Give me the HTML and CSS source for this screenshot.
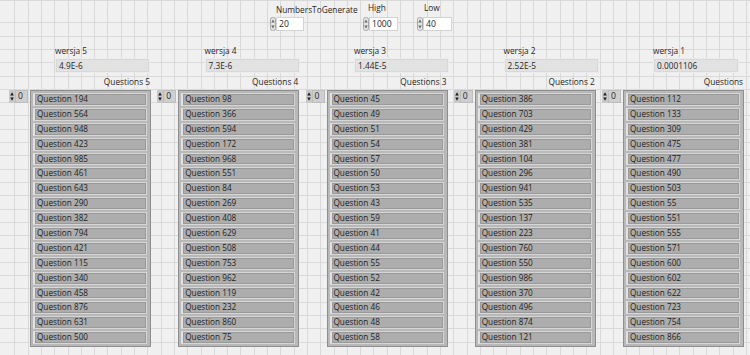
FILE: index.html
```html
<!DOCTYPE html>
<html>
<head>
<meta charset="utf-8">
<link rel="stylesheet" href="styles.css">
</head>
<body>
<div class="panel">
  <div class="top">
    <div class="ctrl ctrl-n">
      <div class="clabel">NumbersToGenerate</div>
      <div class="crow"><svg class="spin" viewBox="0 0 6 14"><rect x="0.5" y="0.5" width="5" height="13" rx="2" fill="#e4e4e4" stroke="#a8a8a8"/><path d="M1.3 5.6 L3 2.6 L4.7 5.6Z M1.3 8.4 L3 11.4 L4.7 8.4Z" fill="#6a6a6a"/></svg><div class="nbox w-n">20</div></div>
    </div>
    <div class="ctrl ctrl-h">
      <div class="clabel">High</div>
      <div class="crow"><svg class="spin" viewBox="0 0 6 14"><rect x="0.5" y="0.5" width="5" height="13" rx="2" fill="#e4e4e4" stroke="#a8a8a8"/><path d="M1.3 5.6 L3 2.6 L4.7 5.6Z M1.3 8.4 L3 11.4 L4.7 8.4Z" fill="#6a6a6a"/></svg><div class="nbox w-h">1000</div></div>
    </div>
    <div class="ctrl ctrl-l">
      <div class="clabel">Low</div>
      <div class="crow"><svg class="spin" viewBox="0 0 6 14"><rect x="0.5" y="0.5" width="5" height="13" rx="2" fill="#e4e4e4" stroke="#a8a8a8"/><path d="M1.3 5.6 L3 2.6 L4.7 5.6Z M1.3 8.4 L3 11.4 L4.7 8.4Z" fill="#6a6a6a"/></svg><div class="nbox w-l">40</div></div>
    </div>
  </div>

  <div class="versions">
    <div class="ver"><div class="vlabel">wersja 5</div><div class="vbox">4.9E-6</div></div>
    <div class="ver"><div class="vlabel">wersja 4</div><div class="vbox">7.3E-6</div></div>
    <div class="ver"><div class="vlabel">wersja 3</div><div class="vbox">1.44E-5</div></div>
    <div class="ver"><div class="vlabel">wersja 2</div><div class="vbox">2.52E-5</div></div>
    <div class="ver ver-last"><div class="vlabel">wersja 1</div><div class="vbox">0.0001106</div></div>
  </div>

  <div class="arrays">
    <div class="arr">
      <div class="alabel">Questions 5</div>
      <div class="abody">
        <div class="idx"><svg class="ispin" viewBox="0 0 6 13"><rect x="0" y="0" width="6" height="13" fill="#c9c9c9"/><path d="M1.2 5.4 L3 2.2 L4.8 5.4Z M1.2 7.6 L3 10.8 L4.8 7.6Z" fill="#1e1e1e"/></svg><div class="ibox">0</div></div>
        <div class="frame">
          <div class="el">Question 194</div><div class="el">Question 564</div><div class="el">Question 948</div><div class="el">Question 423</div><div class="el">Question 985</div><div class="el">Question 461</div><div class="el">Question 643</div><div class="el">Question 290</div><div class="el">Question 382</div><div class="el">Question 794</div><div class="el">Question 421</div><div class="el">Question 115</div><div class="el">Question 340</div><div class="el">Question 458</div><div class="el">Question 876</div><div class="el">Question 631</div><div class="el">Question 500</div>
        </div>
      </div>
    </div>
    <div class="arr">
      <div class="alabel">Questions 4</div>
      <div class="abody">
        <div class="idx"><svg class="ispin" viewBox="0 0 6 13"><rect x="0" y="0" width="6" height="13" fill="#c9c9c9"/><path d="M1.2 5.4 L3 2.2 L4.8 5.4Z M1.2 7.6 L3 10.8 L4.8 7.6Z" fill="#1e1e1e"/></svg><div class="ibox">0</div></div>
        <div class="frame">
          <div class="el">Question 98</div><div class="el">Question 366</div><div class="el">Question 594</div><div class="el">Question 172</div><div class="el">Question 968</div><div class="el">Question 551</div><div class="el">Question 84</div><div class="el">Question 269</div><div class="el">Question 408</div><div class="el">Question 629</div><div class="el">Question 508</div><div class="el">Question 753</div><div class="el">Question 962</div><div class="el">Question 119</div><div class="el">Question 232</div><div class="el">Question 860</div><div class="el">Question 75</div>
        </div>
      </div>
    </div>
    <div class="arr">
      <div class="alabel">Questions 3</div>
      <div class="abody">
        <div class="idx"><svg class="ispin" viewBox="0 0 6 13"><rect x="0" y="0" width="6" height="13" fill="#c9c9c9"/><path d="M1.2 5.4 L3 2.2 L4.8 5.4Z M1.2 7.6 L3 10.8 L4.8 7.6Z" fill="#1e1e1e"/></svg><div class="ibox">0</div></div>
        <div class="frame">
          <div class="el">Question 45</div><div class="el">Question 49</div><div class="el">Question 51</div><div class="el">Question 54</div><div class="el">Question 57</div><div class="el">Question 50</div><div class="el">Question 53</div><div class="el">Question 43</div><div class="el">Question 59</div><div class="el">Question 41</div><div class="el">Question 44</div><div class="el">Question 55</div><div class="el">Question 52</div><div class="el">Question 42</div><div class="el">Question 46</div><div class="el">Question 48</div><div class="el">Question 58</div>
        </div>
      </div>
    </div>
    <div class="arr">
      <div class="alabel">Questions 2</div>
      <div class="abody">
        <div class="idx"><svg class="ispin" viewBox="0 0 6 13"><rect x="0" y="0" width="6" height="13" fill="#c9c9c9"/><path d="M1.2 5.4 L3 2.2 L4.8 5.4Z M1.2 7.6 L3 10.8 L4.8 7.6Z" fill="#1e1e1e"/></svg><div class="ibox">0</div></div>
        <div class="frame">
          <div class="el">Question 386</div><div class="el">Question 703</div><div class="el">Question 429</div><div class="el">Question 381</div><div class="el">Question 104</div><div class="el">Question 296</div><div class="el">Question 941</div><div class="el">Question 535</div><div class="el">Question 137</div><div class="el">Question 223</div><div class="el">Question 760</div><div class="el">Question 550</div><div class="el">Question 986</div><div class="el">Question 370</div><div class="el">Question 496</div><div class="el">Question 874</div><div class="el">Question 121</div>
        </div>
      </div>
    </div>
    <div class="arr">
      <div class="alabel">Questions</div>
      <div class="abody">
        <div class="idx"><svg class="ispin" viewBox="0 0 6 13"><rect x="0" y="0" width="6" height="13" fill="#c9c9c9"/><path d="M1.2 5.4 L3 2.2 L4.8 5.4Z M1.2 7.6 L3 10.8 L4.8 7.6Z" fill="#1e1e1e"/></svg><div class="ibox">0</div></div>
        <div class="frame">
          <div class="el">Question 112</div><div class="el">Question 133</div><div class="el">Question 309</div><div class="el">Question 475</div><div class="el">Question 477</div><div class="el">Question 490</div><div class="el">Question 503</div><div class="el">Question 55</div><div class="el">Question 551</div><div class="el">Question 555</div><div class="el">Question 571</div><div class="el">Question 600</div><div class="el">Question 602</div><div class="el">Question 622</div><div class="el">Question 723</div><div class="el">Question 754</div><div class="el">Question 866</div>
        </div>
      </div>
    </div>
  </div>
</div>
</body>
</html>
```

FILE: styles.css
```css
* { box-sizing: border-box; }
html, body { margin: 0; padding: 0; }
body {
  width: 750px;
  height: 355px;
  overflow: hidden;
  font-family: "Open Sans", "DejaVu Sans", sans-serif;
  font-size: 8.3px;
  color: #262626;
}
.panel {
  width: 750px;
  height: 355px;
  background-color: #f0f0f0;
  background-image:
    repeating-linear-gradient(to right, transparent 0, transparent 12.3px, #d9d9d9 12.3px, #d9d9d9 13.3px),
    repeating-linear-gradient(to bottom, transparent 0, transparent 12.3px, #d9d9d9 12.3px, #d9d9d9 13.3px);
  background-position: 2px 10px;
  display: flex;
  flex-direction: column;
}

/* top numeric controls */
.top {
  display: flex;
  height: 45px;
  padding-top: 4px;
}
.ctrl { display: flex; flex-direction: column; flex: none; }
.ctrl-n { margin-left: 270px; width: 93px; }
.ctrl-h { width: 54px; }
.ctrl-l { width: 40px; }
.clabel { line-height: 12px; height: 13px; padding-left: 6px; white-space: nowrap; }
.ctrl-h .clabel { margin-top: -2px; padding-left: 5px; margin-bottom: 2px; }
.ctrl-l .clabel { margin-top: -2px; padding-left: 7px; margin-bottom: 2px; }
.crow { display: flex; align-items: center; }
.spin { width: 6px; height: 14px; display: block; }
.nbox {
  height: 14px;
  background: #ffffff;
  border: 1px solid #d2d2d2;
  line-height: 12px;
  padding-left: 2px;
  font-size: 8.6px;
}
.w-n { width: 28px; }
.w-h { width: 29px; }
.w-l { width: 29px; }

/* version indicators */
.versions {
  display: flex;
  padding-left: 55px;
  gap: 54.5px;
  height: 31px;
}
.ver { display: flex; flex-direction: column; width: 95px; }
.ver-last { width: 86px; }
.vlabel { line-height: 12px; height: 13px; white-space: nowrap; }
.vbox {
  height: 15px;
  background: #e2e2e2;
  border: 1px solid #ececec;
  box-shadow: inset 0 0 0 1px #d8d8d8;
  line-height: 13px;
  padding-left: 3px;
}

/* arrays */
.arrays {
  display: flex;
  padding-left: 9px;
  gap: 6.25px;
}
.arr { width: 142px; display: flex; flex-direction: column; }
.alabel {
  text-align: right;
  line-height: 12px;
  height: 14px;
  padding-right: 1px;
  white-space: nowrap;
}
.abody { display: flex; align-items: flex-start; }
.idx { display: flex; width: 21px; }
.ispin { width: 6px; height: 13px; display: block; }
.ibox {
  width: 13px;
  height: 13px;
  background: #cfcfcf;
  border: 1px solid #bdbdbd;
  line-height: 11px;
  padding-left: 2px;
  font-size: 8.6px;
}
.frame {
  width: 121px;
  height: 257px;
  background: #b8b8b8;
  border: 1px solid #8e8e8e;
  padding: 2px 3px 2px 2px;
  display: flex;
  flex-direction: column;
  gap: 2px;
}
.el {
  height: 12.9px;
  flex: none;
  background: #adadad;
  border: 1px solid #d6d6d6;
  border-left: 2px solid #e2e2e2;
  box-shadow: inset 0 0 0 1px #9a9a9a;
  line-height: 10.9px;
  padding-left: 2px;
  font-size: 8.2px;
  color: #1e1e1e;
  white-space: nowrap;
  overflow: hidden;
}
```
